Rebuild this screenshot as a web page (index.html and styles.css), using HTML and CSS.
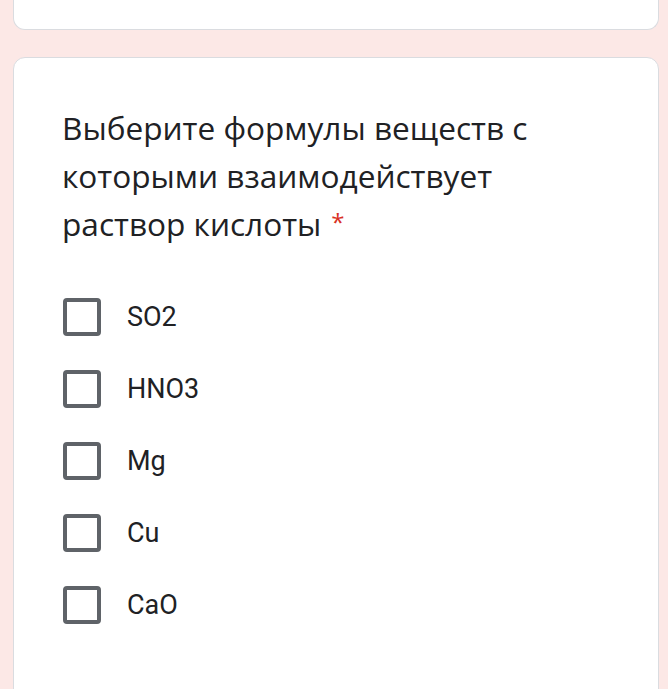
FILE: index.html
```html
<!DOCTYPE html>
<html lang="ru">
<head>
<meta charset="utf-8">
<link rel="stylesheet" href="styles.css">
</head>
<body>
<div class="card card-prev"></div>
<div class="card card-question">
  <div class="title">Выберите формулы веществ с которыми взаимодействует раствор кислоты<span class="req">*</span></div>
  <div class="options">
    <label class="option"><span class="box"></span><span class="label">SO2</span></label>
    <label class="option"><span class="box"></span><span class="label">HNO3</span></label>
    <label class="option"><span class="box"></span><span class="label">Mg</span></label>
    <label class="option"><span class="box"></span><span class="label">Cu</span></label>
    <label class="option"><span class="box"></span><span class="label">CaO</span></label>
  </div>
</div>
</body>
</html>
```
FILE: styles.css
```css
html, body {
  margin: 0;
  padding: 0;
  background: #fce8e6;
}
body {
  padding: 0 9px 0 13px;
  height: 689px;
  overflow: hidden;
  box-sizing: border-box;
}
.card {
  background: #fff;
  border: 1.5px solid #dadce0;
  box-sizing: border-box;
}
.card-prev {
  height: 30px;
  border-top: none;
  border-radius: 0 0 12px 12px;
}
.card-question {
  margin-top: 27px;
  border-radius: 12px 12px 0 0;
  padding: 46px 48px 0 48px;
  height: 640px;
}
.title {
  font-family: "Open Sans", sans-serif;
  font-size: 31.6px;
  line-height: 48px;
  color: #202124;
  max-width: 500px;
}
.req {
  display: inline-block;
  color: #d93025;
  margin-left: 10px;
  font-size: 24px;
  line-height: 1;
  vertical-align: 5px;
}
.options {
  margin-top: 33px;
  display: flex;
  flex-direction: column;
}
.option {
  height: 72px;
  display: flex;
  align-items: center;
  gap: 26px;
}
.box {
  width: 30px;
  height: 30px;
  border: 4px solid #5f6368;
  border-radius: 4px;
  margin-left: 1px;
}
.label {
  font-family: Roboto, sans-serif;
  font-size: 27px;
  color: #202124;
}
```
